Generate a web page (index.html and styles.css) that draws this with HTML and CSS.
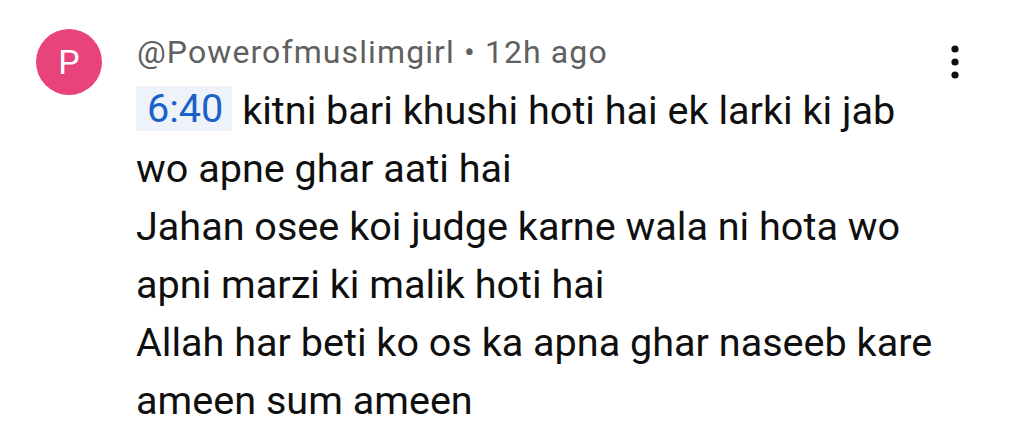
FILE: index.html
```html
<!DOCTYPE html>
<html>
<head>
<meta charset="utf-8">
<link rel="stylesheet" href="styles.css">
</head>
<body>
<div class="comment">
  <div class="avatar">P</div>
  <div class="content">
    <div class="meta">@Powerofmuslimgirl • 12h ago</div>
    <div class="text"><span class="chip">6:40</span> kitni bari khushi hoti hai ek larki ki jab<br>wo apne ghar aati hai<br>Jahan osee koi judge karne wala ni hota wo<br>apni marzi ki malik hoti hai<br>Allah har beti ko os ka apna ghar naseeb kare<br>ameen sum ameen</div>
  </div>
  <div class="menu">
    <svg width="12" height="40" viewBox="0 0 12 40"><circle cx="6" cy="7" r="3.6" fill="#0f0f0f"/><circle cx="6" cy="20" r="3.6" fill="#0f0f0f"/><circle cx="6" cy="33" r="3.6" fill="#0f0f0f"/></svg>
  </div>
</div>
</body>
</html>
```
FILE: styles.css
```css
html, body {
  margin: 0;
  padding: 0;
  background: #ffffff;
}
body {
  width: 1024px;
  height: 448px;
  overflow: hidden;
  font-family: Roboto, "Noto Sans", sans-serif;
}
.comment {
  display: flex;
  align-items: flex-start;
  padding: 29px 0 0 36px;
}
.avatar {
  width: 66px;
  height: 66px;
  border-radius: 50%;
  background: #e8437b;
  color: #ffffff;
  font-size: 34px;
  display: flex;
  align-items: center;
  justify-content: center;
  flex-shrink: 0;
}
.content {
  margin-left: 34px;
  margin-top: 3px;
  flex: 1;
}
.meta {
  margin-left: 1px;
  font-size: 32px;
  letter-spacing: 1.1px;
  line-height: 40px;
  color: #606060;
}
.text {
  margin-top: 10px;
  font-size: 39.6px;
  line-height: 58px;
  color: #0f0f0f;
}
.chip {
  display: inline-block;
  background: #eef3fa;
  color: #1a62c8;
  line-height: 45px;
  padding: 0 9px 0 11px;
  vertical-align: 2px;
}
.menu {
  width: 12px;
  margin: 13px 63px 0 0;
}
.menu svg {
  display: block;
}
```
